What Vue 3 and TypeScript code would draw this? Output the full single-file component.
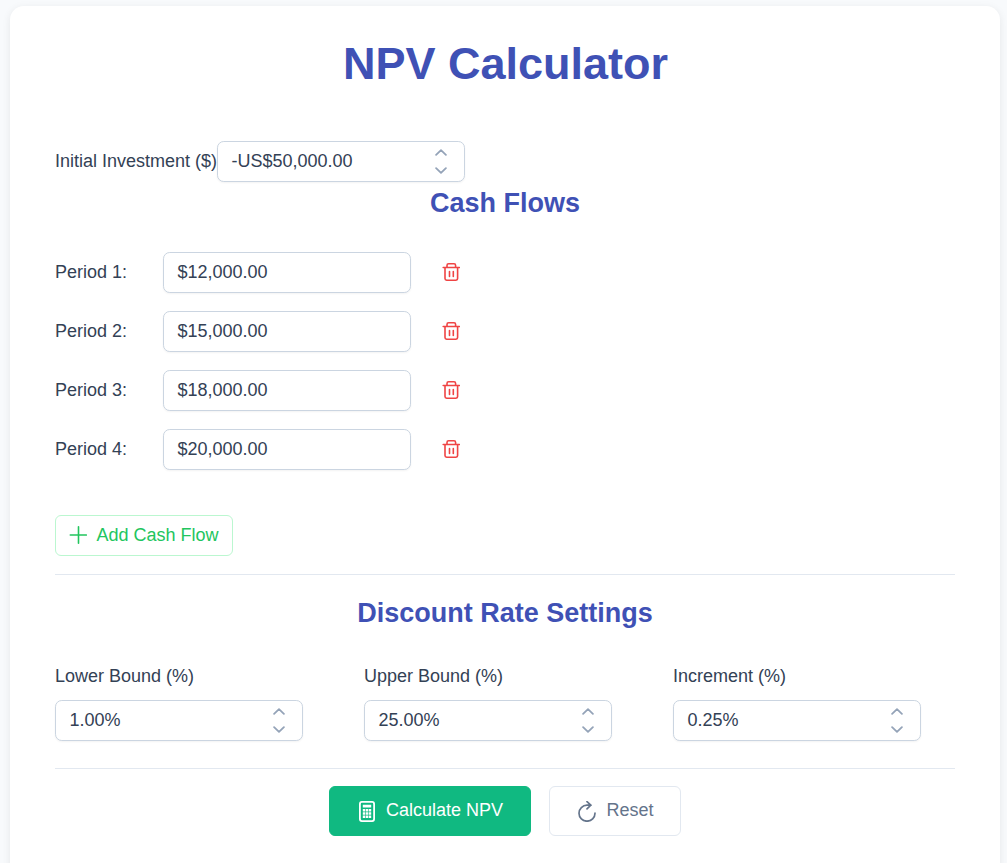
<script setup lang="ts">
import { ref } from 'vue'

interface CashFlow {
  period: number
  amount: number
}

interface RateSetting {
  label: string
  value: number
}

const initialInvestment = ref<number>(-50000)

const cashFlows = ref<CashFlow[]>([
  { period: 1, amount: 12000 },
  { period: 2, amount: 15000 },
  { period: 3, amount: 18000 },
  { period: 4, amount: 20000 },
])

const rateSettings = ref<RateSetting[]>([
  { label: 'Lower Bound (%)', value: 1 },
  { label: 'Upper Bound (%)', value: 25 },
  { label: 'Increment (%)', value: 0.25 },
])

const money = (n: number): string =>
  '$' + Math.abs(n).toLocaleString('en-US', { minimumFractionDigits: 2 })
const signedUsd = (n: number): string => (n < 0 ? '-' : '') + 'US' + money(n)
const percent = (n: number): string => n.toFixed(2) + '%'

function addCashFlow(): void {
  cashFlows.value.push({ period: cashFlows.value.length + 1, amount: 0 })
}

function removeCashFlow(index: number): void {
  cashFlows.value.splice(index, 1)
  cashFlows.value.forEach((flow, i) => (flow.period = i + 1))
}
</script>

<template>
  <div class="page">
    <main class="card">
      <h1>NPV Calculator</h1>

      <div class="investment">
        <label>Initial Investment ($)</label>
        <div class="field">
          <span>{{ signedUsd(initialInvestment) }}</span>
          <span class="spinner">
            <svg viewBox="0 0 12 7"><path d="M1.1 5.8 6 1.2l4.9 4.6" /></svg>
            <svg viewBox="0 0 12 7"><path d="M1.1 1.2 6 5.8l4.9-4.6" /></svg>
          </span>
        </div>
      </div>

      <h2>Cash Flows</h2>
      <div class="flows">
        <div v-for="(flow, i) in cashFlows" :key="flow.period" class="flow">
          <label>Period {{ flow.period }}:</label>
          <div class="field">
            <span>{{ money(flow.amount) }}</span>
          </div>
          <button class="remove" type="button" @click="removeCashFlow(i)">
            <svg viewBox="0 0 18 18">
              <path d="M1.2 4.5h16.2M5 4.5V2.4A1.6 1.6 0 0 1 6.6.8h5.4a1.6 1.6 0 0 1 1.6 1.6v2.1M3 4.5v11.1a1.6 1.6 0 0 0 1.6 1.6H14a1.6 1.6 0 0 0 1.6-1.6V4.5M7.5 8.6v4.8M11.3 8.6v4.8" />
            </svg>
          </button>
        </div>
      </div>

      <button class="add" type="button" @click="addCashFlow">
        <svg viewBox="0 0 18 18"><path d="M9.5 .8v16.4M1.3 9h16" /></svg>
        <span>Add Cash Flow</span>
      </button>

      <hr />

      <h2 class="rates-title">Discount Rate Settings</h2>
      <div class="rates">
        <div v-for="setting in rateSettings" :key="setting.label" class="rate">
          <label>{{ setting.label }}</label>
          <div class="field">
            <span>{{ percent(setting.value) }}</span>
            <span class="spinner">
              <svg viewBox="0 0 12 7"><path d="M1.1 5.8 6 1.2l4.9 4.6" /></svg>
              <svg viewBox="0 0 12 7"><path d="M1.1 1.2 6 5.8l4.9-4.6" /></svg>
            </span>
          </div>
        </div>
      </div>

      <hr class="second" />

      <div class="actions">
        <button class="calculate" type="button">
          <svg viewBox="0 0 16 21">
            <rect class="outline" x=".9" y=".9" width="14.2" height="19.2" rx="2" />
            <path class="keys" d="M3.8 3.8h8.4v2.8H3.8zM3.8 8h2.4v2.4H3.8zM6.8 8h2.4v2.4H6.8zM9.8 8h2.4v2.4H9.8zM3.8 11.3h2.4v2.4H3.8zM6.8 11.3h2.4v2.4H6.8zM9.8 11.3h2.4v2.4H9.8zM3.8 14.6h2.4V17H3.8zM6.8 14.6h2.4V17H6.8zM9.8 14.6h2.4V17H9.8z" />
          </svg>
          <span>Calculate NPV</span>
        </button>
        <button class="reset" type="button">
          <svg viewBox="0 0 18 21">
            <path d="M17 12.2a8 8 0 1 1-8-8h4M9 .7l3.8 3.5L9 7.8" />
          </svg>
          <span>Reset</span>
        </button>
      </div>
    </main>
  </div>
</template>

<style>
body {
  background: #f8fafc;
}
</style>

<style scoped>
* {
  box-sizing: border-box;
}

.page {
  height: 100vh;
  overflow: hidden;
  padding: 6px 7px 0 10px;
  background: #f8fafc;
  color: #334155;
  font-family: 'Liberation Sans', Arial, sans-serif;
  font-size: 18px;
  line-height: 21px;
}

.card {
  width: 990px;
  height: 900px;
  padding: 31px 45px 0;
  border-radius: 14px;
  background: #fff;
  box-shadow: 0 2px 9px rgba(0, 0, 0, 0.08);
}

h1,
h2 {
  margin: 0;
  color: #3f51b5;
  font-weight: 700;
  text-align: center;
}

h1 {
  padding-left: 1px;
  font-size: 45px;
  line-height: 54px;
}

h2 {
  margin-top: 6px;
  font-size: 27px;
  line-height: 31px;
}

svg {
  display: block;
  flex: none;
  fill: none;
  stroke: currentColor;
  stroke-width: 1.6;
  stroke-linecap: round;
  stroke-linejoin: round;
}

button {
  display: flex;
  align-items: center;
  margin: 0;
  border: 1px solid transparent;
  border-radius: 6px;
  background: transparent;
  font: inherit;
  cursor: pointer;
}

.investment {
  display: flex;
  margin-top: 50px;
}

.investment label {
  width: 162px;
  padding-top: 10px;
  white-space: nowrap;
}

.field {
  display: flex;
  justify-content: space-between;
  width: 248px;
  height: 41px;
  padding: 9px 17px 0 13.5px;
  border: 1px solid #cbd5e1;
  border-radius: 6.75px;
  background: #fff;
  box-shadow: 0 1px 2px rgba(18, 18, 23, 0.05);
}

.spinner {
  display: flex;
  flex-direction: column;
  gap: 11.5px;
  margin-top: -2.5px;
  color: #94a3b8;
}

.spinner svg {
  width: 12px;
  height: 7px;
  stroke-width: 1.8;
}

.flows {
  display: flex;
  flex-direction: column;
  gap: 18px;
  margin-top: 33px;
}

.flow {
  display: flex;
}

.flow label {
  width: 108px;
  padding-top: 10px;
}

.remove {
  justify-content: center;
  width: 45px;
  height: 41px;
  margin-left: 18px;
  padding: 0 1px 1px 0;
  color: #ef4444;
}

.remove svg {
  width: 18px;
  height: 18px;
}

.add {
  gap: 9px;
  width: 178px;
  height: 41px;
  margin-top: 45px;
  padding: 0 0 0 13.5px;
  border-color: #bbf7d0;
  color: #22c55e;
}

.add svg {
  width: 18px;
  height: 18px;
  margin: -1px 0.5px 0 -0.5px;
}

.add span {
  margin-top: -1px;
  white-space: nowrap;
}

hr {
  height: 1px;
  margin: 18px 0 0;
  border: 0;
  background: #e2e8f0;
}

.rates-title {
  margin-top: 23px;
}

.rates {
  display: grid;
  grid-template-columns: repeat(3, 248px);
  column-gap: 61px;
  margin-top: 37px;
}

.rate label {
  display: block;
  margin-bottom: 13px;
}

.second {
  margin-top: 27px;
}

.actions {
  display: flex;
  justify-content: center;
  gap: 18px;
  margin-top: 17px;
}

.actions button {
  height: 50px;
}

.actions span {
  margin-top: -1px;
}

.calculate {
  gap: 11px;
  width: 202px;
  padding: 0 0 0 29px;
  border-color: #10b981;
  background: #10b981;
  color: #fff;
}

.calculate svg {
  width: 16px;
  height: 21px;
}

.outline {
  stroke-width: 1.8;
}

.keys {
  fill: currentColor;
  stroke: none;
}

.reset {
  gap: 10.5px;
  width: 132px;
  padding: 0 0 0 28px;
  border-color: #e2e8f0;
  color: #64748b;
}

.reset svg {
  width: 18px;
  height: 21px;
  stroke-width: 1.7;
}
</style>
